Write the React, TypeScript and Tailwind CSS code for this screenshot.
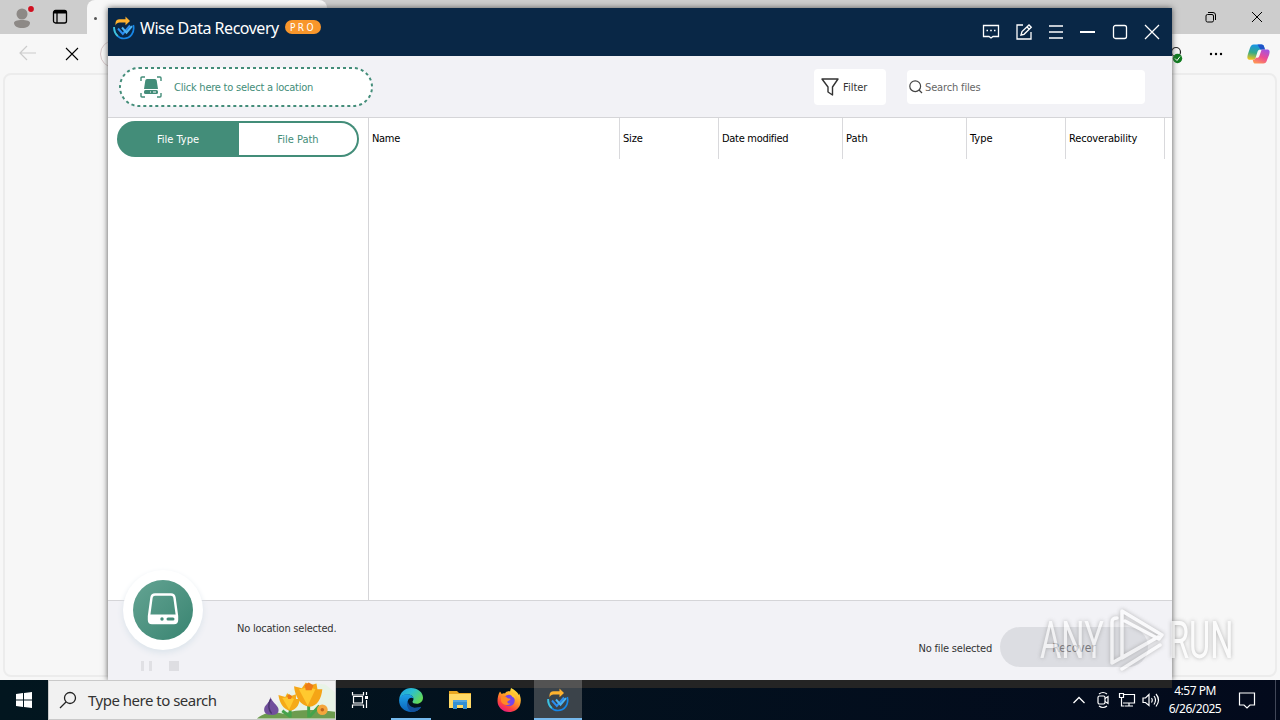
import React from 'react';

interface IconProps {
    className?: string;
}

const UserIcon: React.FC<IconProps> = ({ className }) => (
    <svg viewBox="0 0 24 26" className={className} fill="#8d8986">
        <circle cx="12" cy="9" r="5.5" />
        <path d="M4 18c0-2 3-3 8-3s8 1 8 3c0 3-3.500 5-8 5s-8-2-8-5z" />
        <circle cx="21" cy="4" r="3.600" fill="#d9d3d3" />
        <circle cx="21" cy="4" r="2.900" fill="#cf1020" />
    </svg>
);

const WiseLogo: React.FC<IconProps> = ({ className }) => (
    <svg viewBox="0 0 22 24" className={className} fill="none">
        <path d="M1.200 11c-.5 6.500 4 11.500 9.800 11.500 6.500 0 11-6 9.300-13.500" stroke="#1687e8" strokeWidth="1.700" />
        <path d="M1.200 11c-.3 4 1.200 7 3.600 9" stroke="#41c4d8" strokeWidth="1.700" />
        <path d="M5 12.500l4.800 5.500L17 9.500" stroke="#2a8df0" strokeWidth="2" />
        <path d="M9 11.500l4.500 5.200 5.500-6.500" stroke="#4db4f2" strokeWidth="2" />
        <path d="M2.500 9.500V7c.2-2.300 1.500-3.800 4-3.800h6V.6L17 5l-4.500 4.200V6.600H6.500C4.800 6.600 3.400 7.500 2.500 9.500z" fill="#ffb22e" />
    </svg>
);

const EdgeIcon: React.FC<IconProps> = ({ className }) => (
    <svg viewBox="0 0 24 24" className={className}>
        <defs>
            <linearGradient id="edgeTop" x1="0" y1="0" x2="1" y2="0.6">
                <stop offset="0" stopColor="#1b9de2" />
                <stop offset="0.5" stopColor="#2cc0cf" />
                <stop offset="1" stopColor="#63d957" />
            </linearGradient>
            <linearGradient id="edgeSide" x1="0" y1="0" x2="0" y2="1">
                <stop offset="0" stopColor="#1da1e8" />
                <stop offset="1" stopColor="#0b62b8" />
            </linearGradient>
        </defs>
        <path d="M.3 11C1 4.300 6 0 12 0c7 0 12 4.500 12 9.700 0 3.600-2.800 6-6.200 6-3 0-4.300-1-4.300-2 0-.8 1-1.200 1-3 0-2.300-2.400-4.300-6-4.300C4.500 6.400 1.500 8.500.3 11z" fill="url(#edgeTop)" />
        <path d="M.1 12C.3 8.500 4 6.300 8 6.300c3.500 0 6.500 2 6.500 4.500-1.200-1.600-4.900-1.300-5.700 2.200-1 4.500 4 8.500 10.200 6.600 1.500-.4 3-.8 2.800.1C19.500 22.500 16 24 12.300 24 5 24-.2 18.600.1 12z" fill="url(#edgeSide)" />
        <path d="M8.900 12.700C6.300 16.500 9.500 22.800 13 24c4 0 7.200-1.900 9-4.700.2-.4-.2-.7-.7-.4C15.500 21.300 9 18.500 8.900 12.700z" fill="#134f9a" />
    </svg>
);

const FolderIcon: React.FC<IconProps> = ({ className }) => (
    <svg viewBox="0 0 24 20" className={className}>
        <path d="M1 1h8l2 2h12v5H1z" fill="#e8a722" />
        <path d="M1 4h22v14H1z" fill="#ffd966" />
        <path d="M5 10h14v9h-4v-4H9v4H5z" fill="#348fd3" />
        <path d="M5 10h14v2H5z" fill="#55a5de" />
    </svg>
);

const FirefoxIcon: React.FC<IconProps> = ({ className }) => (
    <svg viewBox="0 0 24 24" className={className}>
        <defs>
            <linearGradient id="fox" x1="0.8" y1="0" x2="0.25" y2="1">
                <stop offset="0" stopColor="#ffec43" />
                <stop offset="0.45" stopColor="#ff9826" />
                <stop offset="0.75" stopColor="#ff453d" />
                <stop offset="1" stopColor="#e31587" />
            </linearGradient>
        </defs>
        <path d="M3 3.500l1.700 2.500C6 5.200 7 5.300 8 5.500 9 3.500 11 3 13 3.500L14 0c3 1.500 6.500 4 7.800 7 .3-.7.200-1.500 0-2C24 9 24.400 13 23 17c-2 4.700-6 7-11 7C5.500 24 .5 19 .5 13c0-3.500.8-7 2.500-9.500z" fill="url(#fox)" />
        <circle cx="12" cy="12.500" r="5.700" fill="#7544e8" />
        <path d="M4 8.500c3-1 5 0 6.500 1.500 1 .8 3 .4 3 1.200 0 1-2.500 1.300-3 2.300-.4 1.200 1 2.500 3 2-2.500 3-8.500 1.500-9.500-2.500z" fill="#ff8a25" />
        <path d="M11 3.500c4.500.5 8 4 7.500 8.500-.5-2-2-3-3-3-1-2-2.500-3-4.500-5.500z" fill="#ffc52e" />
    </svg>
);

const CopilotIcon: React.FC<IconProps> = ({ className }) => (
    <svg viewBox="0 0 24 22" className={className}>
        <defs>
            <linearGradient id="copLeft" x1="0.5" y1="0" x2="0.3" y2="1">
                <stop offset="0" stopColor="#1693ee" />
                <stop offset="0.55" stopColor="#35aa88" />
                <stop offset="1" stopColor="#f0c51b" />
            </linearGradient>
            <linearGradient id="copRight" x1="0.7" y1="0" x2="0.2" y2="1">
                <stop offset="0" stopColor="#a553df" />
                <stop offset="0.5" stopColor="#ed4c93" />
                <stop offset="1" stopColor="#ff9951" />
            </linearGradient>
        </defs>
        <path d="M7 1h8c2 0 2.500 1 3 3l.7 2.200H14c-2 0-2.500 1-3.200 3L9 15c-.5 1.600-1.500 2-3 2H3c-3 0-3-2.500-2-6l2-6c.8-2.700 2-4 4-4z" fill="url(#copLeft)" />
        <path d="M11 1h4c2 0 2.500 1 3 3l.7 2.200H14z" fill="#2053c8" />
        <path d="M17 21H9c-2 0-2.500-1-3-4 2 0 2.700-.8 3.200-2H10c2 0 2.700-1 3.300-3L15 7c.5-1 1-.8 2-.8h4c3 0 3 2.500 2 5.800l-2 5c-.8 2.700-2 4-4 4z" fill="url(#copRight)" />
    </svg>
);

const Flowers: React.FC<IconProps> = ({ className }) => (
    <svg viewBox="0 0 82 38" className={className}>
        <path d="M22 25C30 8 50 0 72 3l10 8v27H15z" fill="#e8f3e6" />
        <path d="M2 38c8-7 18-7 27-5 15-5 34-4 53-2v7z" fill="#6d9c4f" />
        <path d="M36 37V24M55 37V22M36 36l-8-6M56 36l10-11" stroke="#45a34b" strokeWidth="3" fill="none" />
        <path d="M16 16c1 5 7 8 8 12 1 5-3 7-8 6-5 1-8-3-6-8 2-3 5-5 6-10z" fill="#71509c" />
        <path d="M16 18c-3 6-2 11 1 15" stroke="#4b356f" strokeWidth="1.500" fill="none" />
        <path d="M24 14l7 2 2-4 4 3 5-2v5h4c-1 7-4 11-10 12-7-1-11-8-12-16z" fill="#f5aa18" />
        <path d="M28 17l7 12 5-11-5-2z" fill="#ffc92f" />
        <path d="M40 5l8 2 4-6 5 3 6-2 1 6 5 0c-1 10-5 17-13 18C46 25 41 15 40 5z" fill="#f5a516" />
        <path d="M45 8l9 17 8-17-7-2z" fill="#ffc92f" />
        <path d="M51 4l4-3 5 3-2 5h-6zM33 15l2-2 3 2-1 3h-3z" fill="#ee7b17" />
        <circle cx="69" cy="29" r="5.500" fill="#f4a63c" />
        <circle cx="69" cy="29" r="1.800" fill="#bd651c" />
    </svg>
);

const DriveIcon: React.FC<IconProps> = ({ className }) => (
    <svg viewBox="0 0 32 32" className={className} fill="none">
        <path d="M8 1.500h16q3 0 3.500 3L30 23v4q0 3-3 3H5q-3 0-3-3v-4L4.500 4.500q.5-3 3.500-3z" stroke="white" strokeWidth="2.400" />
        <path d="M2 21.500h28v5.500q0 3-3 3H5q-3 0-3-3z" fill="white" />
        <circle cx="15" cy="26" r="1.700" fill="#438d79" />
        <path d="M21 26h5" stroke="#438d79" strokeWidth="3" strokeLinecap="round" />
    </svg>
);

const columns = [
    { label: 'Name', className: 'w-[251px] tracking-[-0.3px]' },
    { label: 'Size', className: 'w-[99px] tracking-[-0.2px]' },
    { label: 'Date modified', className: 'w-[124px] tracking-[-0.3px]' },
    { label: 'Path', className: 'w-[124px]' },
    { label: 'Type', className: 'w-[99px]' },
    { label: 'Recoverability', className: 'w-[99px] tracking-[-0.15px]' },
];

const Browser = () => (
    <div className="flex h-[680px] flex-col bg-[#f7f7f7]">
        <div className="flex h-[34px] bg-[#cdcdcd]">
            <div className="flex w-[87px]">
                <UserIcon className="ml-[10px] mt-[5px] h-[26px] w-6" />
                <svg viewBox="0 0 16 16" className="ml-[18px] mt-[9px] h-4 w-4" fill="none" stroke="black" strokeWidth="1.300">
                    <rect x="1.500" y="1.500" width="13" height="12.500" rx="2" />
                    <path d="M2 3h12" strokeWidth="3" />
                    <path d="M5 4v10" />
                </svg>
            </div>
            <div className="h-[34px] w-[240px] rounded-t-lg bg-[#f7f7f7] pl-[7px] pt-[17px]">
                <div className="h-[3px] w-[3px] rounded-full bg-[#555]" />
            </div>
            <div className="ml-auto flex">
                <svg viewBox="0 0 12 12" className="mr-[34px] mt-[11px] h-3 w-3" fill="none" stroke="black">
                    <rect x="1" y="3.500" width="7.500" height="7.500" rx="1.500" />
                    <path d="M3 1.500h5a2.500 2.500 0 0 1 2.500 2.500v5" />
                </svg>
                <svg viewBox="0 0 12 12" className="mr-[17px] mt-[11px] h-3 w-3" stroke="black"><path d="M1 1l10 10M11 1L1 11" /></svg>
            </div>
        </div>
        <div className="flex h-[39px] shrink-0">
            <svg viewBox="0 0 18 18" className="ml-[19px] mt-[10px] h-[18px] w-[18px]" fill="none" stroke="#ccc" strokeWidth="1.200"><path d="M17 9H1M8 2L1 9l7 7" /></svg>
            <svg viewBox="0 0 14 14" className="ml-[28px] mt-[13px] h-[14px] w-[14px]" stroke="black" strokeWidth="1.100"><path d="M1 1l12 12M13 1L1 13" /></svg>
            <div className="ml-[21px] mt-[6px] h-[28px] w-[40px] rounded-full border border-[#d5c6c8]" />
            <svg viewBox="0 0 16 18" className="ml-auto mr-[25px] mt-[12px] h-[18px] w-4" fill="none">
                <circle cx="8" cy="6" r="4.500" stroke="#222" strokeWidth="1.200" />
                <circle cx="9.500" cy="12.500" r="4.700" fill="#107c20" />
                <path d="M7 12.500l2 2 3-4" stroke="white" />
            </svg>
            <svg viewBox="0 0 14 4" className="mr-[24px] mt-[18px] h-1 w-[14px]" fill="black"><circle cx="2" cy="2" r="1.200" /><circle cx="7" cy="2" r="1.200" /><circle cx="12" cy="2" r="1.200" /></svg>
            <CopilotIcon className="mr-[10px] mt-[9px] h-[22px] w-[23px]" />
        </div>
        <div className="mx-[3px] h-[604px] rounded-lg border-2 border-[#ececec] bg-[#f7f7f7]" />
    </div>
);

const TitleBar = () => (
    <div className="flex h-12 bg-[#092746] text-white">
        <WiseLogo className="ml-[5px] mt-[8px] h-6 w-[22px]" />
        <span className="ml-[5px] mt-[8px] h-6 w-[140px] whitespace-nowrap font-['Noto_Sans'] text-[16px] leading-6 tracking-[-0.48px]">Wise Data Recovery</span>
        <span className="ml-[5px] mt-[12px] h-[14px] w-9 rounded-full bg-[#f8962b] pl-[5px] text-[10px] leading-[15px] tracking-[2.4px]">PRO</span>
        <div className="ml-auto mr-[11px] mt-[15px] flex gap-[14px]">
            <svg viewBox="0 0 18 18" className="-ml-px mr-px h-[18px] w-[18px]" fill="none" stroke="currentColor" strokeWidth="1.300">
                <path d="M1.500 2.500h15v11h-5.500L9 15l-2-1.500H1.500z" /><path d="M4.500 7.500h1.500M8.200 7.500h1.600M12 7.500h1.500" strokeWidth="1.600" />
            </svg>
            <svg viewBox="0 0 18 18" className="h-[18px] w-[18px]" fill="none" stroke="currentColor" strokeWidth="1.300">
                <path d="M8 2H2v14h14V9M6 12l1-3.500L14 2l2.300 2.300L9 11.300zM12 4l2.300 2.300" />
            </svg>
            <svg viewBox="0 0 18 18" className="h-[18px] w-[18px]" stroke="currentColor" strokeWidth="1.300"><path d="M2 3h14M2 9h14M2 15h14" /></svg>
            <svg viewBox="0 0 18 18" className="-ml-px mr-px h-[18px] w-[18px]" stroke="currentColor" strokeWidth="2"><path d="M2 9h15" /></svg>
            <svg viewBox="0 0 18 18" className="h-[18px] w-[18px]" fill="none" stroke="currentColor" strokeWidth="1.300"><rect x="2.500" y="2.500" width="13" height="13" rx="2" /></svg>
            <svg viewBox="0 0 18 18" className="h-[18px] w-[18px]" stroke="currentColor" strokeWidth="1.300"><path d="M2 2l14 14M16 2L2 16" /></svg>
        </div>
    </div>
);

const Toolbar = () => (
    <div className="flex h-[62px] items-start border-b border-[#d5d5d8] bg-[#f2f2f6]">
        <button className="relative ml-[11px] mt-[11px] flex h-10 w-[254px] items-center">
            <svg viewBox="0 0 254 40" className="absolute inset-0 h-10 w-[254px]">
                <rect x="1" y="1" width="252" height="38" rx="19" fill="white" stroke="#438d79" strokeWidth="2" strokeDasharray="3 3" />
            </svg>
            <svg viewBox="0 0 22 22" className="relative ml-[21px] h-[22px] w-[22px]" fill="none" stroke="#438d79" strokeWidth="1.400">
                <path d="M1 5V2q0-1 1-1h3M17 1h3q1 0 1 1v3M21 17v3q0 1-1 1h-3M5 21H2q-1 0-1-1v-3" />
                <path d="M7 3h8q1.500 0 1.700 1.500L18 13H4l1.300-8.500Q5.500 3 7 3z" fill="#438d79" stroke="none" />
                <rect x="4" y="14" width="14" height="4" rx="1.500" fill="#438d79" stroke="none" />
                <path d="M10 16h1M13 16h3" stroke="white" strokeWidth="1" />
            </svg>
            <span className="relative ml-[12px] whitespace-nowrap pt-[2px] text-[11px] tracking-[-0.23px] text-[#438d79]">Click here to select a location</span>
        </button>
        <button className="ml-auto mt-[13px] flex h-9 w-[72px] items-center rounded bg-white pl-[7px] text-[11px] text-[#333]">
            <svg viewBox="0 0 18 18" className="mr-1 h-[18px] w-[18px]" fill="none" stroke="#333" strokeWidth="1.400" strokeLinejoin="round"><path d="M1 1h16l-5.500 8v8L7 14V9z" /></svg>
            <span className="pt-[2px]">Filter</span>
        </button>
        <div className="ml-[21px] mr-[27px] mt-[14px] flex h-[34px] w-[238px] items-center rounded bg-white pl-[2px] text-[11px] tracking-[-0.15px] text-[#666]">
            <svg viewBox="0 0 14 14" className="mr-[2px] h-[14px] w-[14px]" fill="none" stroke="#444" strokeWidth="1.200"><circle cx="6.200" cy="6.200" r="5.400" /><path d="M10 10l3 3" /></svg>
            <span className="pt-[2px]">Search files</span>
        </div>
    </div>
);

const Workspace = () => (
    <div className="flex h-[482px] bg-white">
        <div className="w-[261px] border-r border-[#d5d5d8] pl-[9px] pt-[3px]">
            <div className="flex h-9 w-[242px] rounded-full bg-[#438d79] p-[2px] text-[11px]">
                <button className="w-[120px] pr-[2px] pt-[2px] text-white">File Type</button>
                <button className="flex-1 rounded-r-full bg-white pt-[2px] text-[#438d79]">File Path</button>
            </div>
        </div>
        <div className="flex h-[41px]">
            {columns.map(col => (
                <div key={col.label} className={`${col.className} whitespace-nowrap border-r border-[#d9d9dc] pl-[3px] text-[11px] leading-[42px] text-black`}>{col.label}</div>
            ))}
        </div>
    </div>
);

const Footer = () => (
    <div className="flex h-20 border-t border-[#d5d5d8] bg-[#f2f2f6] text-[11px] text-[#333]">
        <div className="-mt-[31px] ml-[15px] w-20">
            <div className="flex h-20 w-20 items-center justify-center rounded-full bg-white shadow-[0_3px_6px_#dce4eb]">
                <div className="flex h-[60px] w-[60px] items-center justify-center rounded-full bg-gradient-to-br from-[#64a493] to-[#388471] pb-[2px]">
                    <DriveIcon className="h-8 w-8" />
                </div>
            </div>
            <div className="ml-[18px] mt-[11px] flex gap-[17px]">
                <div className="flex h-[10px] w-[11px] justify-between">
                    <div className="w-[3px] bg-[#e0e0e4]" />
                    <div className="w-[3px] bg-[#e0e0e4]" />
                </div>
                <div className="h-[10px] w-[10px] bg-[#dedee2]" />
            </div>
        </div>
        <span className="ml-[34px] mt-[20px] h-4 leading-4 tracking-[-0.22px]">No location selected.</span>
        <span className="ml-auto mt-[40px] h-4 leading-4 tracking-[-0.2px]">No file selected</span>
        <button className="ml-2 mr-[24px] mt-[26px] h-10 w-[148px] rounded-full bg-[#dcdde2] pt-px text-[12px] text-[#77777d]">Recover</button>
    </div>
);

const Watermark = () => (
    <div className="absolute left-[1040px] top-[607px] flex h-[66px] w-[194px] items-center text-white opacity-60 drop-shadow-[0_0_2px_#888]">
        <span className="w-[62px] origin-left scale-x-[0.64] whitespace-nowrap font-['Roboto'] text-[51px] leading-none">ANY</span>
        <svg viewBox="0 0 56 66" className="ml-[7px] h-[66px] w-[56px] shrink-0" fill="none" stroke="currentColor" strokeWidth="3.500" strokeLinejoin="round" strokeLinecap="round">
            <path d="M3 56V15q0-4 5-4M13 51V4l40 24-3 4L16 14M13 51l36-21M3 56l46-26M13 62l38-24" />
        </svg>
        <span className="ml-[4px] origin-left scale-x-[0.64] whitespace-nowrap font-['Roboto'] text-[51px] leading-none">RUN</span>
    </div>
);

const Taskbar = () => (
    <div className="relative flex h-10 bg-gradient-to-r from-[#02161f] to-[#030a1c] font-['Noto_Sans'] text-white">
        {/* window edge showing through the bar */}
        <div className="absolute left-[336px] top-0 h-2 w-[836px] bg-[#242424]" />
        <div className="flex w-12 shrink-0 items-center justify-center">
            <svg viewBox="0 0 16 16" className="h-4 w-4" fill="white"><path d="M0 2l7-1v6.500H0zM8 1l8-1v7.500H8zM0 8.500h7V15l-7-1zM8 8.500h8V16l-8-1z" /></svg>
        </div>
        <div className="flex w-[288px] shrink-0 items-center border border-[#c9c9c9] bg-[#f1f1f1] text-[#333]">
            <svg viewBox="0 0 18 18" className="ml-[10px] h-[18px] w-[18px]" fill="none" stroke="#222" strokeWidth="1.300"><circle cx="11" cy="7" r="5.500" /><path d="M7 11l-6 6" /></svg>
            <span className="ml-[11px] whitespace-nowrap text-[15px] tracking-[-0.5px]">Type here to search</span>
            <Flowers className="ml-auto h-[38px] w-20" />
        </div>
        <div className="relative flex shrink-0">
            <div className="flex w-12 items-center justify-center">
                <svg viewBox="0 0 18 18" className="h-[18px] w-[18px]" fill="none" stroke="white" strokeWidth="1.200"><path d="M1.500 1v3h11V1M1.500 17v-3h11v3M2.500 5.500h9v6.500h-9zM15.500 1v3M15.500 9v8" /><path d="M15.500 5v3" strokeWidth="3" /></svg>
            </div>
            <div className="ml-[7px] flex w-10 justify-center border-b-2 border-[#76b9ed] pt-2"><EdgeIcon className="h-6 w-6" /></div>
            <div className="flex w-[58px] justify-center pt-[10px]"><FolderIcon className="h-5 w-6" /></div>
            <div className="flex w-10 justify-center pt-2"><FirefoxIcon className="h-6 w-6" /></div>
            <div className="ml-[5px] flex w-12 flex-col items-center border-b-2 border-[#76b9ed] bg-[#3b434a]">
                <div className="h-2 w-full bg-[#535353]" />
                <WiseLogo className="h-6 w-6" />
            </div>
        </div>
        <div className="relative ml-auto flex shrink-0 items-center">
            <svg viewBox="0 0 14 8" className="mr-[10px] h-2 w-[14px]" fill="none" stroke="white" strokeWidth="1.300"><path d="M1.500 7L7 1.500 12.500 7" /></svg>
            <svg viewBox="0 0 14 18" className="mr-[8px] h-[18px] w-[14px]" fill="none" stroke="white" strokeWidth="1.200"><path d="M3 3q4-3 8 0M3 15q4 3 8 0M9 7.500l3-2v7l-3-2" /><rect x="2" y="5" width="7" height="8" rx="1.500" /></svg>
            <svg viewBox="0 0 18 16" className="mr-[6px] h-4 w-[18px]" fill="none" stroke="white" strokeWidth="1.200"><path d="M6 2.500h10.500v8.500H5M11 11v3M7 14h8M3.500 6v8h3M1.500 1.500h4v4h-4z" /></svg>
            <svg viewBox="0 0 18 16" className="mr-[8px] h-4 w-[18px]" fill="none" stroke="white" strokeWidth="1.200"><path d="M1 6v4.500h2.500l3.500 3v-11l-3.500 3.500zM9.500 6q1.500 2 0 4.500M12 4q3 4 0 8.500M14 2q5 6 0 12.500" /></svg>
            <div className="w-[54px] whitespace-nowrap pb-px text-center text-[12px] leading-[18px] tracking-[-0.5px]">
                <div>4:57 PM</div>
                <div>6/26/2025</div>
            </div>
            <svg viewBox="0 0 18 18" className="ml-[16px] mr-[19px] h-[18px] w-[18px]" fill="none" stroke="white" strokeWidth="1.200"><path d="M1.500 2h15v12H12l-3 3-3-3H1.500z" /></svg>
            <div className="mr-[4px] h-10 w-px bg-[#414758]" />
        </div>
    </div>
);

const App = () => (
    <div className="relative h-[720px] w-[1280px] overflow-hidden font-['DejaVu_Sans_Condensed','DejaVu_Sans',sans-serif]">
        <Browser />
        <div className="absolute left-[108px] top-2 w-[1064px] shadow-[0_0_6px_#555]">
            <TitleBar />
            <Toolbar />
            <Workspace />
            <Footer />
        </div>
        <Taskbar />
        <Watermark />
    </div>
);

export default App;
